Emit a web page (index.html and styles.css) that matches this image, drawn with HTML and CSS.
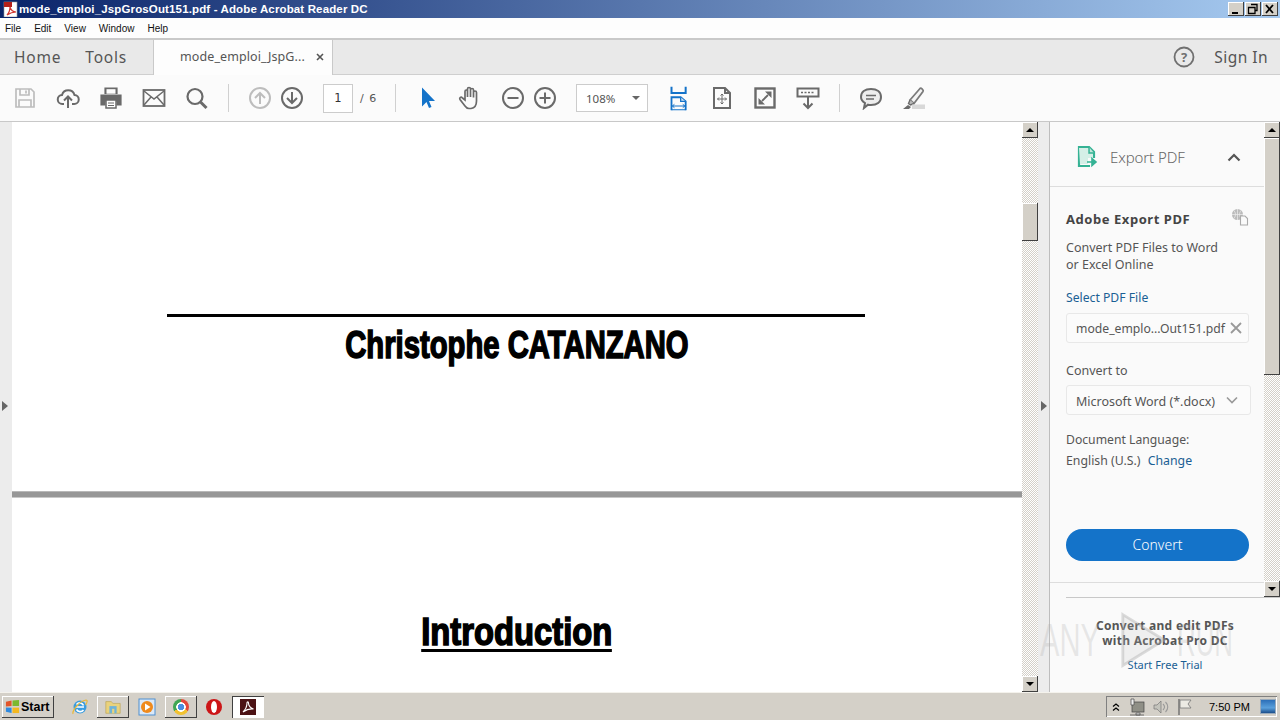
FILE: index.html
```html
<!DOCTYPE html>
<html lang="en">
<head>
	<meta charset="UTF-8">
	<title>mode_emploi_JspGrosOut151.pdf - Adobe Acrobat Reader DC</title>
	<link rel="stylesheet" href="styles.css">
</head>
<body>
	<div class="titlebar">
		<svg class="app-icon" viewBox="0 0 16 16"><rect x="1" y="1" width="13" height="15" fill="#fff" stroke="#999" stroke-width=".6"/><rect x="1" y="1" width="8" height="5" fill="#b3201a"/><path d="M4 14c2-2 3-6 3-8 1 3 3 5 6 5-3 0-6 1-9 3z" fill="none" stroke="#d0342c" stroke-width="1.2"/></svg>
		<span class="title-text">mode_emploi_JspGrosOut151.pdf - Adobe Acrobat Reader DC</span>
		<div class="win-btns">
			<span class="win-btn"><svg viewBox="0 0 16 14"><rect x="4" y="10" width="6" height="2" fill="#000"/></svg></span>
			<span class="win-btn"><svg viewBox="0 0 16 14"><path d="M6 2.500h6v6h-2M3.500 5.500h6.500v6h-6.500z" fill="none" stroke="#000" stroke-width="1.300"/></svg></span>
			<span class="win-btn"><svg viewBox="0 0 16 14"><path d="M4 3l7 8M11 3l-7 8" stroke="#000" stroke-width="1.800"/></svg></span>
		</div>
	</div>
	<div class="menubar">
		<span>File</span><span>Edit</span><span>View</span><span>Window</span><span>Help</span>
	</div>
	<div class="tabbar">
		<span class="nav-tab nav-home">Home</span>
		<span class="nav-tab nav-tools">Tools</span>
		<div class="doc-tab">
			<span class="doc-name">mode_emploi_JspG...</span>
			<svg class="doc-close" viewBox="0 0 8 8"><path d="M1 1l6 6M7 1l-6 6" stroke="#555" stroke-width="1.600"/></svg>
		</div>
		<svg class="help-icon" viewBox="0 0 22 22"><circle cx="11" cy="11" r="9.500" fill="none" stroke="#707070" stroke-width="1.800"/><text x="11" y="15.500" class="help-q">?</text></svg>
		<span class="sign-in">Sign In</span>
	</div>
	<div class="toolbar">
		<div class="tools">
			<svg class="tool" viewBox="0 0 24 24"><path d="M3 3h15l3 3v15H3zM7 3v6h9V3M6 21v-7h12v7M13 4.500v3" fill="none" stroke="#bdbdbd" stroke-width="1.700"/></svg>
			<svg class="tool" viewBox="0 0 24 24"><path d="M8 18H6.500a4.500 4.500 0 0 1-.5-9 6.500 6.500 0 0 1 12.500 0 4.500 4.500 0 0 1-.5 9H16M12 22V11M8 14.500l4-4 4 4" fill="none" stroke="#6a6a6a" stroke-width="2"/></svg>
			<svg class="tool" viewBox="0 0 24 24"><path d="M6 8V2h12v6M2 9h20v10h-4v-4H6v4H2z" fill="#6a6a6a" stroke="#6a6a6a" stroke-width="1.200"/><rect x="7" y="14" width="10" height="8" fill="#fff" stroke="#6a6a6a" stroke-width="1.500"/><path d="M9 17h6M9 19.500h6" stroke="#6a6a6a"/><rect x="7.500" y="3.200" width="9" height="4.500" fill="#fff"/></svg>
			<svg class="tool" viewBox="0 0 24 24"><rect x="1.500" y="4" width="21" height="16" fill="none" stroke="#6a6a6a" stroke-width="1.800"/><path d="M2 5l10 8 10-8M2 19l7-8M22 19l-7-8" fill="none" stroke="#6a6a6a" stroke-width="1.500"/></svg>
			<svg class="tool" viewBox="0 0 24 24"><circle cx="10" cy="10.500" r="7.500" fill="none" stroke="#6a6a6a" stroke-width="2.200"/><path d="M15.500 16l6 6" stroke="#6a6a6a" stroke-width="3"/></svg>
			<span class="sep"></span>
			<div class="pair">
				<svg class="tool" viewBox="0 0 24 24"><circle cx="12" cy="12" r="10" fill="none" stroke="#bdbdbd" stroke-width="2"/><path d="M12 18V7M7 12l5-5 5 5" fill="none" stroke="#bdbdbd" stroke-width="2"/></svg>
				<svg class="tool" viewBox="0 0 24 24"><circle cx="12" cy="12" r="10" fill="none" stroke="#6a6a6a" stroke-width="2"/><path d="M12 6v11M7 12l5 5 5-5" fill="none" stroke="#6a6a6a" stroke-width="2"/></svg>
			</div>
			<div class="pager">
				<span class="page-box">1</span>
				<span class="page-total">/ 6</span>
			</div>
			<span class="sep"></span>
			<svg class="tool" viewBox="0 0 24 24"><path d="M7 1.500v19l4.500-4.500 2.500 6 2.500-1-2.500-6H20z" fill="#1473c9"/></svg>
			<svg class="tool" viewBox="0 0 24 24"><path d="M7 20l-5-6.500c-1-2 1-3 2.500-1.500L7 14V5.500c0-2 2.500-2 2.500 0V11V3c0-2 3-2 3 0V11V4c0-2 3-2 3 0V11.500V6.500c0-2 3-2 3 0v8.500c0 4-1.500 7-5.500 7.500H11c-2 0-3-1-4-2.500z" fill="none" stroke="#6a6a6a" stroke-width="1.700"/></svg>
			<div class="pair">
				<svg class="tool" viewBox="0 0 24 24"><circle cx="12" cy="12" r="10" fill="none" stroke="#6a6a6a" stroke-width="2"/><path d="M6.500 12h11" stroke="#6a6a6a" stroke-width="2"/></svg>
				<svg class="tool" viewBox="0 0 24 24"><circle cx="12" cy="12" r="10" fill="none" stroke="#6a6a6a" stroke-width="2"/><path d="M6.500 12h11M12 6.500v11" stroke="#6a6a6a" stroke-width="2"/></svg>
			</div>
			<div class="zoom-box">
				<span>108%</span>
				<i class="caret"></i>
			</div>
			<svg class="tool tool-tall" viewBox="0 0 24 30"><path d="M3 1v7.500h17V1" fill="none" stroke="#1473c9" stroke-width="2.400"/><path d="M3 29V13.500h11l6 5V29" fill="none" stroke="#1473c9" stroke-width="2.200"/><path d="M14 13.500v5h6" fill="#cfe2f5" stroke="#1473c9" stroke-width="1.500"/><path d="M3 28.500h17" stroke="#1473c9" stroke-width="1.200"/><path d="M4 24h15M6.500 22l-2.500 2 2.500 2M16.500 22l2.500 2-2.500 2" fill="none" stroke="#1473c9" stroke-width="1.200"/></svg>
			<svg class="tool" viewBox="0 0 24 24"><path d="M4 2h11l5 5v15H4zM15 2v5h5" fill="none" stroke="#6a6a6a" stroke-width="2"/><path d="M12 8v10M7.500 13h9M10.500 9.500l1.500-1.500 1.500 1.500M10.500 16.500l1.500 1.500 1.500-1.500M9 11.500l-1.500 1.500 1.500 1.500M15 11.500l1.500 1.500-1.500 1.500" fill="none" stroke="#6a6a6a"/></svg>
			<svg class="tool" viewBox="0 0 24 24"><rect x="2.500" y="2.500" width="19" height="19" fill="none" stroke="#6a6a6a" stroke-width="2.400"/><path d="M12 5.500h6.500V12zM12 18.500H5.500V12z" fill="#6a6a6a"/><path d="M15 9l-3.500 3.500M9 15l3.500-3.500" stroke="#6a6a6a" stroke-width="1.800"/></svg>
			<svg class="tool" viewBox="0 0 24 24"><rect x="1.500" y="2.500" width="21" height="8" fill="none" stroke="#6a6a6a" stroke-width="2"/><path d="M5 6.500h14" stroke="#6a6a6a" stroke-width="1.500" stroke-dasharray="2 1.500"/><path d="M12 11v11M7.500 17.500l4.500 4.500 4.500-4.500" fill="none" stroke="#6a6a6a" stroke-width="2"/></svg>
			<span class="sep"></span>
			<svg class="tool" viewBox="0 0 24 24"><path d="M12 3c6 0 10 3 10 8s-4 8-10 8c-1 0-2 0-3-.3L5 22l1-5c-2.500-1.500-4-3.500-4-6 0-5 4-8 10-8z" fill="#ededed" stroke="#6a6a6a" stroke-width="2"/><path d="M7 9.500h10M7 13h8" stroke="#6a6a6a" stroke-width="1.300"/></svg>
			<svg class="tool" viewBox="0 0 24 24"><path d="M8 14l10-11.500c1-1 4 1.500 3 3L12 17.500z" fill="#f4f4f4" stroke="#7a7a7a" stroke-width="1.800"/><path d="M8 14l-1.500 3.500 2 1.500 3.500-1.500" fill="#bbb" stroke="#6a6a6a" stroke-width="1.400"/><rect x="10" y="18.500" width="13" height="4.500" fill="#d8d8d8"/><path d="M1 23l5-4 3 2-2 2z" fill="#6a6a6a"/></svg>
		</div>
	</div>
	<div class="main">
		<div class="strip strip-left"><i class="arrow-right"></i></div>
		<div class="doc-view">
			<div class="page page-first">
				<div class="rule"></div>
				<div class="doc-name-line"><span class="impact">Christophe CATANZANO</span></div>
			</div>
			<div class="page-gap"></div>
			<div class="page page-second">
				<div class="doc-heading"><span class="impact impact-ul">Introduction</span></div>
			</div>
		</div>
		<div class="scrollbar scroll-doc">
			<span class="sb-btn"><i class="arrow-up"></i></span>
			<span class="sb-thumb"></span>
			<span class="sb-btn sb-end"><i class="arrow-down"></i></span>
		</div>
		<div class="strip strip-right"><i class="arrow-right"></i></div>
		<div class="side">
			<div class="side-top">
				<div class="panel">
					<div class="panel-head">
						<svg class="export-icon" viewBox="0 0 22 22"><path d="M13 20H2V1h10l5 5v6" fill="none" stroke="#35b294" stroke-width="2.200"/><path d="M2 2h9v5h5v5h-5v6H3z" fill="#d5efe7"/><path d="M12 1v6h5" fill="#bfe6da" stroke="#35b294" stroke-width="1.500"/><path d="M10 16h8M15 12.500l4 3.500-4 3.500z" fill="#35b294" stroke="#35b294" stroke-width="1.600"/></svg>
						<span class="head-title">Export PDF</span>
						<svg class="chev" viewBox="0 0 14 9"><path d="M1.500 7.500L7 2l5.500 5.500" fill="none" stroke="#555" stroke-width="2.200"/></svg>
					</div>
					<div class="panel-body">
						<div class="body-title">
							<span>Adobe Export PDF</span>
							<svg class="globe-icon" viewBox="0 0 18 18"><circle cx="6.500" cy="6.500" r="5.500" fill="#bbb"/><path d="M1 6.500h11M6.500 1v11M3 2.500c2 3 2 5 0 8M10 2.500c-2 3-2 5 0 8" fill="none" stroke="#eee" stroke-width=".7"/><path d="M9.500 8h4.500l2.500 2.500v6.500h-7z" fill="#fafafa" stroke="#aaa" stroke-width="1.100"/></svg>
						</div>
						<p class="desc">Convert PDF Files to Word<br>or Excel Online</p>
						<a class="link select-link">Select PDF File</a>
						<div class="field field-file">
							<span>mode_emplo...Out151.pdf</span>
							<svg class="field-x" viewBox="0 0 12 12"><path d="M1 1l10 10M11 1L1 11" stroke="#999" stroke-width="1.800"/></svg>
						</div>
						<div class="label-to">Convert to</div>
						<div class="field field-select">
							<span>Microsoft Word (*.docx)</span>
							<svg class="field-chev" viewBox="0 0 12 8"><path d="M1 1.500l5 5 5-5" fill="none" stroke="#999" stroke-width="1.600"/></svg>
						</div>
						<div class="label-lang">Document Language:</div>
						<div class="lang-line">English (U.S.) <a class="link change-link">Change</a></div>
						<div class="convert-btn">Convert</div>
					</div>
				</div>
				<div class="scrollbar scroll-panel">
					<span class="sb-btn"><i class="arrow-up"></i></span>
					<span class="sb-thumb"></span>
					<span class="sb-btn sb-end"><i class="arrow-down"></i></span>
				</div>
			</div>
			<div class="promo-rule"></div>
			<div class="promo">
				<div class="promo-line">Convert and edit PDFs<br>with Acrobat Pro DC</div>
				<a class="link promo-link">Start Free Trial</a>
			</div>
			<div class="watermark">
				<span class="wm-any">ANY</span>
				<svg class="wm-play" viewBox="0 0 50 60"><path d="M3 3l44 27L3 57z" fill="rgba(190,190,190,.18)" stroke="rgba(170,170,170,.4)" stroke-width="3"/></svg>
				<span class="wm-run">RUN</span>
			</div>
		</div>
	</div>
	<div class="taskbar">
		<div class="start-btn">
			<svg class="start-flag" viewBox="0 0 16 16"><path d="M1 3l6-1.500v6L1 8z" fill="#e2552a"/><path d="M8 1.500L15 1v6.500L8 7.500z" fill="#7cb82f"/><path d="M1 9l6 .2v5.800L1 13.500z" fill="#2f8ae0"/><path d="M8 9.200h7V15l-7 0z" fill="#f4b81f"/></svg>
			<span>Start</span>
		</div>
		<svg class="task-icon" viewBox="0 0 18 18"><circle cx="9" cy="9" r="6.500" fill="#3a9de0"/><path d="M5 9h8M5.500 6.500c2-2.500 6-2 7 1M5.500 11.500c1.500 2.500 5 3 7 .5" fill="none" stroke="#fff" stroke-width="1.600"/><path d="M2 16c-1-3 6-13 13-14 2 0 1 3-.5 5" fill="none" stroke="#e8b83a" stroke-width="1.200"/></svg>
		<span class="task-btn task-files"><svg viewBox="0 0 20 18"><path d="M2 3h6l2 2h8v11H2z" fill="#e9d27c" stroke="#b59a45" stroke-width=".6"/><rect x="6" y="8" width="8" height="8" fill="#6fb3d8"/><rect x="9" y="11" width="2.500" height="5" fill="#e9d27c"/></svg></span>
		<svg class="task-icon task-wmp" viewBox="0 0 18 18"><rect x="1" y="1" width="16" height="16" fill="#dbe9f8" stroke="#4f8fd0"/><circle cx="9" cy="9" r="6" fill="#ef8a1d"/><path d="M7 5.500L12.500 9 7 12.500z" fill="#fff"/></svg>
		<span class="task-btn task-chrome"><i class="chrome-ball"></i></span>
		<svg class="task-icon task-opera" viewBox="0 0 18 18"><circle cx="9" cy="9" r="8" fill="#cc1517"/><ellipse cx="9" cy="9" rx="3" ry="6" fill="#fff"/></svg>
		<span class="task-btn task-acro"><svg viewBox="0 0 16 16"><rect width="16" height="16" fill="#4c1214"/><path d="M3 13c2-2 4-6 4-9 0-1.500 1.500-1.500 1.500 0 0 3 2 5 5 6-4-.5-7 .5-10.500 3z" fill="none" stroke="#fff" stroke-width="1.100"/></svg></span>
		<div class="tray">
			<svg class="tray-chev" viewBox="0 0 8 10"><path d="M1 4.500L4 2l3 2.500M1 8.500L4 6l3 2.500" fill="none" stroke="#000" stroke-width="1.200"/></svg>
			<svg class="tray-icon" viewBox="0 0 18 18"><rect x="4" y="4" width="12" height="10" fill="#8f8f86" stroke="#444" stroke-width=".7"/><path d="M3 1h3v6H3zM8 15h4v2H8zM2 17h14" fill="#eee" stroke="#555" stroke-width=".8"/></svg>
			<svg class="tray-icon" viewBox="0 0 18 18"><path d="M2 7h3l4-4v12l-4-4H2z" fill="#c4c4bc" stroke="#777" stroke-width=".7"/><path d="M11 6c2 2 2 4 0 6M13.500 4c3 3 3 7 0 10" fill="none" stroke="#999" stroke-width="1.100"/></svg>
			<svg class="tray-icon" viewBox="0 0 18 18"><path d="M3 1v16" stroke="#666" stroke-width="1.300"/><path d="M4 2h11l-3 4 3 4H4z" fill="#ecebe4" stroke="#777" stroke-width=".8"/></svg>
			<span class="clock">7:50 PM</span>
			<span class="show-desk"></span>
		</div>
	</div>
</body>
</html>
```

FILE: styles.css
```css
html,body{
	margin: 0;
	padding: 0;
}
body{
	width: 1280px;
	height: 720px;
	overflow: hidden;
	display: flex;
	flex-direction: column;
	font-family: "Liberation Sans", Arial, sans-serif;
	background: #fff;
}
i{
	display: block;
}
p{
	margin: 0;
}

/* window title */
.titlebar{
	height: 18px;
	display: flex;
	align-items: center;
	background: linear-gradient(to right, #0a246a, #a6caf0);
	color: #fff;
	font-size: 11.500px;
	font-weight: bold;
	letter-spacing: .14px;
}
.app-icon{
	width: 16px;
	height: 16px;
	margin: 0 0 0 3px;
}
.title-text{
	flex: 1;
}
.win-btns{
	display: flex;
	gap: 1px;
	margin-right: 2px;
}
.win-btn{
	width: 16px;
	height: 14px;
	background: #d4d0c8;
	box-shadow: inset -1px -1px 0 #404040, inset 1px 1px 0 #fff;
}
.win-btn svg{
	display: block;
}

.menubar{
	height: 20px;
	display: flex;
	align-items: center;
	gap: 13px;
	padding-left: 5px;
	background: #fdfdfd;
	font-size: 10px;
	color: #111;
}

/* tabs row */
.tabbar{
	height: 34px;
	padding-bottom: 1px;
	display: flex;
	align-items: center;
	background: #e9e9e9;
	border-top: 2px solid #c9c9c9;
	font-family: "Noto Sans", sans-serif;
	color: #555;
	box-shadow: inset 0 -1px 0 #cfcfcf;
}
.nav-tab{
	font-size: 15.500px;
	letter-spacing: .8px;
}
.nav-home{
	margin-left: 14px;
}
.nav-tools{
	margin-left: 24px;
}
.doc-tab{
	width: 180px;
	height: 35px;
	margin: 0 0 -1px 26px;
	background: #fdfdfd;
	border-right: 1px solid #c9c9c9;
	border-left: 1px solid #c9c9c9;
	box-sizing: border-box;
	display: flex;
	align-items: center;
	padding: 0 0 2px 26px;
}
.doc-name{
	font-size: 12.500px;
	letter-spacing: .1px;
	width: 136px;
	white-space: nowrap;
}
.doc-close{
	width: 8px;
	height: 8px;
}
.help-icon{
	width: 22px;
	height: 22px;
	margin-left: auto;
}
.help-q{
	font: bold 13px "Noto Sans", sans-serif;
	fill: #707070;
	text-anchor: middle;
}
.sign-in{
	font-size: 15.500px;
	margin: 0 12px 0 19px;
	letter-spacing: .45px;
}

/* toolbar */
.toolbar{
	height: 47px;
	box-sizing: border-box;
	background: #fbfbfb;
	border-bottom: 1px solid #c8c8c8;
	padding-left: 13px;
	display: flex;
	align-items: center;
}
.tools{
	display: flex;
	align-items: center;
	gap: 19px;
}
.tool{
	width: 24px;
	height: 24px;
	display: block;
	flex: none;
}
.tool-tall{
	height: 25px;
}
.sep{
	width: 1px;
	height: 28px;
	background: #d0d0d0;
}
.pair{
	display: flex;
	gap: 8px;
}
.pager{
	display: flex;
	align-items: center;
	gap: 7px;
	width: 53px;
	font: 11.500px "DejaVu Sans", sans-serif;
	color: #555;
}
.page-box{
	flex: none;
	width: 30px;
	height: 29px;
	box-sizing: border-box;
	border: 1px solid #ccc;
	background: #fff;
	display: flex;
	align-items: center;
	justify-content: center;
	color: #333;
}
.page-total{
	white-space: nowrap;
	font-size: 11px;
	letter-spacing: 1px;
}
.zoom-box{
	width: 72px;
	height: 28px;
	box-sizing: border-box;
	border: 1px solid #ccc;
	background: #fff;
	display: flex;
	align-items: center;
	justify-content: space-between;
	padding: 0 7px 0 9px;
	font: 11.500px "Noto Sans", sans-serif;
	color: #555;
}
.caret{
	width: 0;
	height: 0;
	border-left: 4px solid transparent;
	border-right: 4px solid transparent;
	border-top: 4px solid #666;
}

/* main area */
.main{
	flex: 1;
	min-height: 0;
	display: flex;
}
.strip{
	flex: none;
	width: 12px;
	background: #ececec;
	display: flex;
	align-items: center;
	justify-content: center;
}
.strip-left{
	justify-content: flex-start;
	padding-left: 2px;
	width: 10px;
}
.strip-right{
	box-sizing: border-box;
	border-right: 1px solid #bdbdbd;
}
.arrow-right{
	width: 0;
	height: 0;
	border-top: 5px solid transparent;
	border-bottom: 5px solid transparent;
	border-left: 6px solid #666;
	margin-top: -2px;
}
.doc-view{
	width: 1010px;
	flex: none;
	overflow: hidden;
	background: #fff;
}
.page-first{
	height: 369px;
	box-sizing: border-box;
	padding-top: 192px;
}
.rule{
	width: 698px;
	height: 3px;
	margin-left: 155px;
	background: #000;
}
.doc-name-line{
	margin-left: -1px;
	text-align: center;
	height: 50px;
	margin-top: 5px;
}
.impact{
	display: inline-block;
	font-family: "Liberation Sans", sans-serif;
	font-weight: bold;
	font-size: 39px;
	line-height: 46px;
	color: #000;
	-webkit-text-stroke: 1.600px #000;
	transform: scaleX(.75);
}
.page-gap{
	height: 7px;
	background: #979797;
	border-top: 1px solid #b8b8b8;
	border-bottom: 1px solid #c8c8c8;
	box-sizing: border-box;
}
.doc-heading{
	margin-top: 113px;
	margin-left: -1px;
	text-align: center;
}
.impact-ul{
	line-height: 34px;
	padding-top: 4px;
	border-bottom: 3px solid #000;
	transform: scaleX(.84);
}

/* classic scrollbars */
.scrollbar{
	flex: none;
	width: 16px;
	display: flex;
	flex-direction: column;
	background: repeating-conic-gradient(#d4d0c8 0 25%, #fff 0 50%) 0 0/2px 2px;
}
.sb-btn,.sb-thumb{
	display: flex;
	align-items: center;
	justify-content: center;
	background: #d4d0c8;
	box-shadow: inset -1px -1px 0 #404040, inset 1px 1px 0 #fff;
	flex: none;
}
.sb-btn{
	height: 16px;
}
.sb-end{
	margin-top: auto;
}
.scroll-doc .sb-thumb{
	height: 38px;
	margin-top: 65px;
}
.scroll-panel .sb-thumb{
	height: 237px;
}
.arrow-up{
	width: 0;
	height: 0;
	border-left: 4px solid transparent;
	border-right: 4px solid transparent;
	border-bottom: 4px solid #000;
}
.arrow-down{
	width: 0;
	height: 0;
	border-left: 4px solid transparent;
	border-right: 4px solid transparent;
	border-top: 4px solid #000;
}

/* right side panel */
.side{
	flex: 1;
	position: relative;
	background: #fafafa;
	display: flex;
	flex-direction: column;
	font-family: "Noto Sans", sans-serif;
	color: #555;
}
.side-top{
	height: 475px;
	flex: none;
	display: flex;
}
.panel{
	flex: 1;
	display: flex;
	flex-direction: column;
}
.panel-head{
	height: 65px;
	flex: none;
	box-sizing: border-box;
	border-bottom: 1px solid #ddd;
	display: flex;
	align-items: center;
	padding: 6px 0 0 27px;
}
.export-icon{
	width: 22px;
	height: 22px;
}
.head-title{
	font-size: 15px;
	font-weight: 300;
	margin-left: 11px;
	color: #666;
	letter-spacing: -.1px;
}
.chev{
	width: 14px;
	height: 9px;
	margin-left: auto;
	margin-right: 23px;
}
.panel-body{
	flex: none;
	box-sizing: border-box;
	padding: 23px 15px 0 16px;
	font-size: 12.500px;
	height: 397px;
}
.panel-body::after{
	content: "";
	display: block;
	height: 1px;
	margin: 21px -15px 0 -16px;
	background: #ddd;
}
.body-title{
	display: flex;
	align-items: center;
	justify-content: space-between;
	height: 18px;
	font-size: 13px;
	font-weight: bold;
	color: #444;
	letter-spacing: .55px;
}
.globe-icon{
	width: 18px;
	height: 18px;
	margin-top: -4px;
}
.desc{
	margin-top: 11px;
	line-height: 17px;
}
.link{
	color: #1a5f94;
}
.select-link{
	display: block;
	margin-top: 16px;
	line-height: 17px;
	font-size: 12.200px;
}
.field{
	box-sizing: border-box;
	display: flex;
	align-items: center;
	justify-content: space-between;
	border: 1px solid #e8e8e8;
	border-radius: 3px;
	background: #fbfbfb;
	padding: 0 6px 0 9px;
	white-space: nowrap;
}
.field-file{
	height: 30px;
	margin-top: 7px;
	font-size: 12.200px;
}
.field-x{
	width: 12px;
	height: 12px;
}
.label-to{
	margin-top: 19px;
	line-height: 17px;
}
.field-select{
	height: 30px;
	margin-top: 6px;
	margin-right: -2px;
	padding-top: 2px;
	padding-right: 12px;
}
.field-chev{
	width: 12px;
	height: 8px;
	margin-top: -3px;
}
.label-lang{
	margin-top: 16px;
	line-height: 17px;
	font-size: 12.200px;
}
.lang-line{
	margin-top: 4px;
	line-height: 17px;
	font-size: 12.300px;
}
.change-link{
	margin-left: 4px;
}
.convert-btn{
	height: 32px;
	margin-top: 60px;
	border-radius: 16px;
	background: #1473c9;
	color: #fff;
	display: flex;
	align-items: center;
	justify-content: center;
	padding-bottom: 2px;
	box-sizing: border-box;
	font-size: 14px;
	font-weight: 300;
}
.promo-rule{
	height: 1px;
	flex: none;
	margin-left: 16px;
	background: #c8c8c8;
}
.promo{
	flex: 1;
	text-align: center;
	padding-top: 20px;
	font-size: 12px;
	background: #fafafa;
}
.promo-line{
	font-weight: bold;
	line-height: 15px;
	color: #555;
	letter-spacing: .3px;
}
.promo-link{
	display: block;
	margin-top: 9px;
	line-height: 16px;
	font-size: 11px;
}
.watermark{
	position: absolute;
	left: -10px;
	top: 489px;
	display: flex;
	align-items: center;
	font: 47px/58px "Liberation Sans", sans-serif;
	color: rgba(170,170,170,.25);
	pointer-events: none;
}
.wm-any,.wm-run{
	display: block;
	transform-origin: left center;
	white-space: nowrap;
}
.wm-any{
	width: 60px;
	transform: scaleX(.62);
}
.wm-play{
	width: 47px;
	height: 58px;
	margin: 0 10px 0 20px;
}
.wm-run{
	width: 56px;
	transform: scaleX(.55);
}

/* taskbar */
.taskbar{
	height: 28px;
	box-sizing: border-box;
	background: #d4d0c8;
	border-top: 1px solid #f4f2ec;
	display: flex;
	align-items: center;
}
.start-btn{
	width: 52px;
	height: 22px;
	margin-left: 2px;
	box-sizing: border-box;
	background: #d4d0c8;
	box-shadow: inset -1px -1px 0 #404040, inset 1px 1px 0 #fff;
	display: flex;
	align-items: center;
	gap: 1px;
	padding-left: 3px;
	font-size: 12.500px;
	font-weight: bold;
	color: #000;
}
.start-flag{
	width: 15px;
	height: 15px;
}
.task-icon{
	width: 18px;
	height: 18px;
	margin-left: 17px;
}
.task-btn{
	height: 22px;
	width: 32px;
	display: flex;
	align-items: center;
	justify-content: center;
	background: #d4d0c8;
	box-shadow: inset -1px -1px 0 #404040, inset 1px 1px 0 #fff;
}
.task-btn svg{
	width: 18px;
	height: 18px;
}
.task-files{
	margin-left: 8px;
}
.task-wmp{
	margin-left: 9px;
}
.task-chrome{
	margin-left: 9px;
}
.chrome-ball{
	width: 16px;
	height: 16px;
	border-radius: 50%;
	background: radial-gradient(circle, #4a8fe0 0 3px, #fff 3.500px 4.500px, transparent 5px), conic-gradient(#e3493a 0 33%, #f2c230 33% 66%, #3fa653 66%);
}
.task-opera{
	margin-left: 8px;
}
.task-acro{
	margin-left: 9px;
	background: #fff;
	box-shadow: inset 1px 1px 0 #404040, inset -1px -1px 0 #fff;
}
.task-acro svg{
	width: 16px;
	height: 16px;
}
.tray{
	margin-left: auto;
	margin-right: 3px;
	width: 171px;
	height: 21px;
	box-sizing: border-box;
	box-shadow: inset 1px 1px 0 #808080, inset -1px -1px 0 #fff;
	display: flex;
	align-items: center;
	padding-left: 6px;
}
.tray-chev{
	width: 8px;
	height: 10px;
	margin-right: 2px;
}
.tray-icon{
	width: 18px;
	height: 18px;
	margin-left: 6px;
}
.clock{
	font-size: 11px;
	color: #000;
	margin-left: 15px;
	white-space: nowrap;
}
.show-desk{
	width: 16px;
	height: 15px;
	margin-left: 10px;
	background: linear-gradient(#2c6fb8, #5aa0dc 60%, #1c4f8c);
	border: 1px solid #9ab;
	box-sizing: border-box;
}
```
